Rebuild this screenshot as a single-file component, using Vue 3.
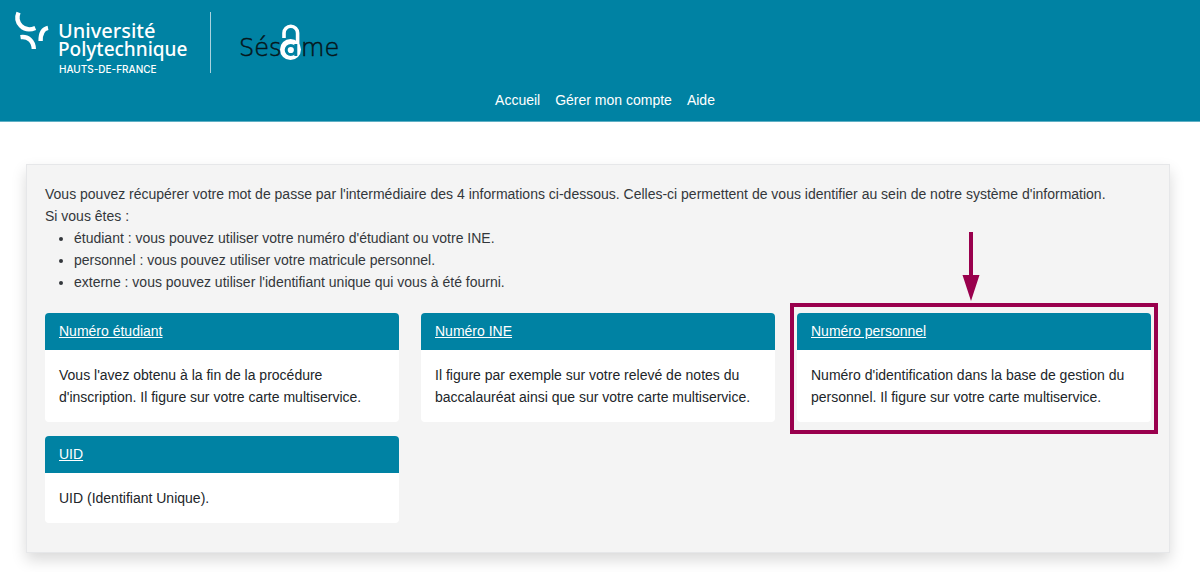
<script setup>
const links = ['Accueil', 'Gérer mon compte', 'Aide']

const profiles = [
  "étudiant : vous pouvez utiliser votre numéro d'étudiant ou votre INE.",
  'personnel : vous pouvez utiliser votre matricule personnel.',
  "externe : vous pouvez utiliser l'identifiant unique qui vous à été fourni.",
]

const methods = [
  { title: 'Numéro étudiant', lines: ["Vous l'avez obtenu à la fin de la procédure", "d'inscription. Il figure sur votre carte multiservice."] },
  { title: 'Numéro INE', lines: ['Il figure par exemple sur votre relevé de notes du', 'baccalauréat ainsi que sur votre carte multiservice.'] },
  { title: 'Numéro personnel', lines: ["Numéro d'identification dans la base de gestion du", 'personnel. Il figure sur votre carte multiservice.'], highlighted: true },
  { title: 'UID', lines: ['UID (Identifiant Unique).'] },
]
</script>

<template>
  <div class="page">
    <header class="banner">
      <div class="logos">
        <svg class="uphf" width="211" height="80" viewBox="0 0 211 80" role="img" aria-label="Université Polytechnique Hauts-de-France">
          <g fill="none" stroke="#fff" stroke-width="4.4">
            <path d="M18.500 12.500C14.500 22 23 33 35.300 28" />
            <path d="M48 27.800C42 29 40.500 34 40.600 41" />
            <path d="M20.500 37.200C28 36 33.500 41 33.800 49" />
          </g>
          <text class="uni first" x="58" y="38">Université</text>
          <text class="uni" x="58" y="56">Polytechnique</text>
          <text class="region" x="59" y="73">HAUTS-DE-FRANCE</text>
          <path d="M210.500 12V73" stroke="#a9d3df" stroke-width="1" />
        </svg>
        <svg class="sesame" width="110" height="80" viewBox="236 0 110 80" role="img" aria-label="Sésame">
          <text class="word" x="239" y="56">Sés</text>
          <text class="word" x="301" y="56">me</text>
          <path d="M284 38V33A6.800 6.800 0 0 1 297.600 33V48" fill="none" stroke="#fff" stroke-width="3.6" />
          <circle cx="290.500" cy="49.500" r="10.500" fill="#fff" />
          <circle cx="290.800" cy="50" r="4.600" fill="none" stroke="#0082a3" stroke-width="3" />
          <path d="M295.800 44V56" stroke="#0082a3" stroke-width="3" />
        </svg>
      </div>
      <nav class="menu">
        <a v-for="link in links" :key="link" href="#">{{ link }}</a>
      </nav>
    </header>

    <main class="panel">
      <p>Vous pouvez récupérer votre mot de passe par l'intermédiaire des 4 informations ci-dessous. Celles-ci permettent de vous identifier au sein de notre système d'information.</p>
      <p>Si vous êtes :</p>
      <ul class="profiles">
        <li v-for="profile in profiles" :key="profile">{{ profile }}</li>
      </ul>

      <div class="methods">
        <section v-for="method in methods" :key="method.title" class="card">
          <h2><a href="#">{{ method.title }}</a></h2>
          <p class="text"><template v-for="(line, i) in method.lines" :key="line"><br v-if="i" />{{ line }}</template></p>
          <template v-if="method.highlighted">
            <div class="frame"></div>
            <svg class="arrow" width="18" height="70" viewBox="0 0 18 70" aria-hidden="true">
              <path d="M7 0H11V43H17.500L9 69L0.500 43H7Z" fill="#99004d" />
            </svg>
          </template>
        </section>
      </div>
    </main>
  </div>
</template>

<style>
body {
  background: #fff;
}
</style>

<style scoped>
.page {
  font-family: "Liberation Sans", Arial, sans-serif;
  font-size: 14px;
  line-height: 22px;
  color: #33373b;
  padding-bottom: 19px;
}

.banner {
  background: #0082a3;
  border-bottom: 1px solid #5fafc4;
}

.logos {
  display: flex;
  gap: 25px;
  height: 80px;
}

.uni {
  font-family: "Noto Sans", sans-serif;
  font-size: 19px;
  font-weight: 500;
  fill: #fff;
}

.uni.first {
  font-size: 20px;
}

.region {
  font-family: Inter, sans-serif;
  font-size: 10px;
  font-weight: 500;
  fill: #fff;
}

.word {
  font-family: "DejaVu Sans Light", "DejaVu Sans", sans-serif;
  font-size: 24px;
  font-weight: 200;
  fill: #06161b;
  stroke: #06161b;
  stroke-width: 0.5;
}

.menu {
  display: flex;
  justify-content: center;
  gap: 15px;
  padding: 9px 0 10px 10px;
}

.menu a {
  color: #fff;
  text-decoration: none;
}

.panel {
  margin: 42px 30px 0 26px;
  padding: 18px 18px 29px;
  background: #f4f4f4;
  border: 1px solid #e6e7e9;
  box-shadow: 0 7px 14px rgba(0, 0, 0, 0.15);
}

p {
  margin: 0;
}

.profiles {
  margin: 0 0 20px;
  padding-left: 29px;
}

.methods {
  display: grid;
  grid-template-columns: repeat(3, minmax(0, 1fr));
  gap: 14px 22px;
}

.card {
  position: relative;
  background: #fff;
  border-radius: 4px;
  color: #212529;
}

.card h2 {
  margin: 0;
  padding: 7px 14px 8px;
  background: #0082a3;
  border-radius: 4px 4px 0 0;
  font-size: inherit;
  font-weight: 400;
}

.card h2 a {
  color: #fff;
}

.text {
  padding: 14px;
}

.frame {
  position: absolute;
  inset: -10px -7px -12px;
  border: 4px solid #99004d;
  pointer-events: none;
}

.arrow {
  position: absolute;
  bottom: calc(100% + 11px);
  left: calc(50% - 12px);
}
</style>
